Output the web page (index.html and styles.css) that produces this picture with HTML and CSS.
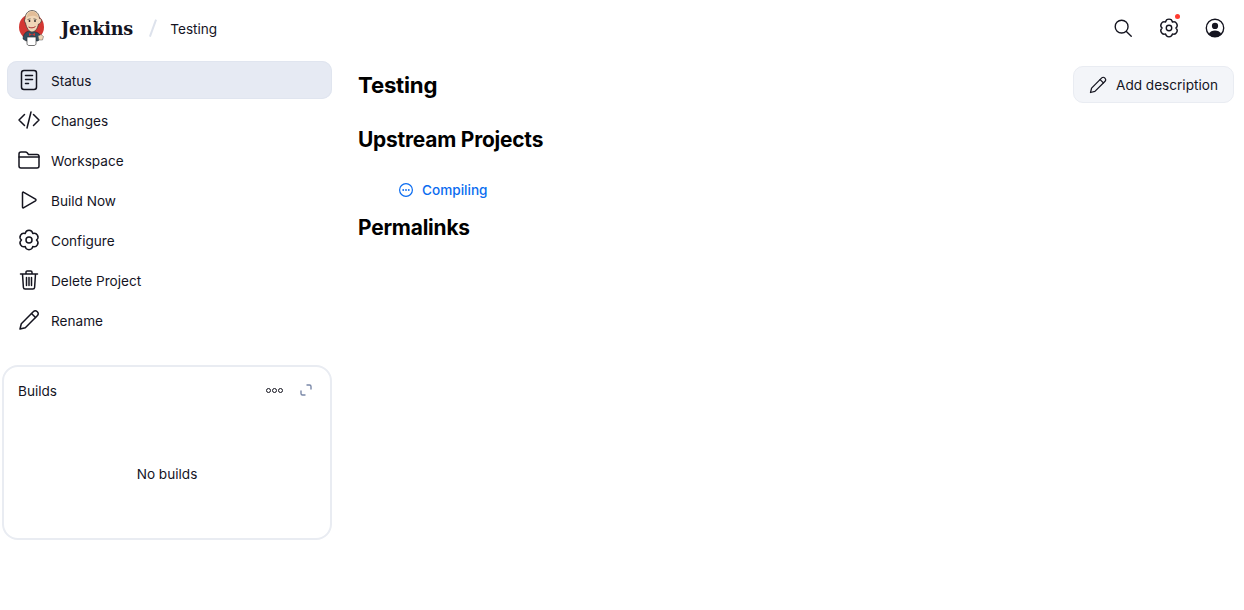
FILE: index.html
```html
<!DOCTYPE html>
<html lang="en">
<head>
    <meta charset="UTF-8">
    <title>Testing - Jenkins</title>
    <link rel="stylesheet" href="styles.css">
</head>
<body>

<header class="topbar">
    <div class="crumbs">
        <svg class="logo" viewBox="0 0 28 36" width="28" height="36">
            <ellipse cx="13.5" cy="17" rx="12.5" ry="13" fill="#d33833"/>
            <path d="M5 29c0-5 3-8 7-8l6 1c3 1 5 3 5 6l-3 3H8z" fill="#335061" stroke="#231f20" stroke-width=".5"/>
            <path d="M7 9c0-5 3-8.500 7-8.500s7 3 7.500 8c1.500 0 2.500 1.500 1.500 3.500s-2.500 2-2.500 2c-1 5-3.500 8-6.500 8s-5.500-4-6.500-9c-1-1-1.500-3-.5-4z" fill="#f0d6b7" stroke="#3a3a3a" stroke-width=".7"/>
            <path d="M8.500 8c1-4.500 3-6.500 5.500-6.500 3 0 5.500 2 6 6-3-2.500-8-2.500-11.500.5z" fill="#e2bd98"/>
            <path d="M9.500 9.500l3-.7M15.500 8.800l3 .7" stroke="#3a3a3a" stroke-width=".7" fill="none"/>
            <circle cx="11.500" cy="11" r=".9" fill="#231f20"/>
            <circle cx="17" cy="11" r=".9" fill="#231f20"/>
            <path d="M10.500 17c2 1.200 5 1.200 7-.5" stroke="#a33" stroke-width="1" fill="none"/>
            <path d="M11 23l3 1.500 3-1.500v3l-3-1.500-3 1.500z" fill="#d33833"/>
            <path d="M9 27h9v6.500c0 1.200-1 2-2 2h-5c-1 0-2-.8-2-2z" fill="#fff" stroke="#333" stroke-width=".7"/>
            <path d="M20 26l3-1.500 2.500 2-1 3.500-3.500 0z" fill="#f0d6b7" stroke="#555" stroke-width=".5"/>
        </svg>
        <span class="brand">Jenkins</span>
        <span class="slash"></span>
        <span class="crumb">Testing</span>
    </div>
    <div class="actions">
        <svg class="icon top" viewBox="0 0 24 24"><circle cx="10.500" cy="10.500" r="7"/><path d="M15.700 15.700l5.300 5.300"/></svg>
        <span class="gear-wrap">
            <svg class="icon top" viewBox="0 0 24 24"><use href="#gear"/></svg>
            <span class="dot"></span>
        </span>
        <svg class="icon top" viewBox="0 0 24 24"><circle cx="12" cy="12" r="9.500"/><circle cx="12" cy="9.800" r="3.400" class="solid"/><path d="M5 18.700c1.500-3 4.300-4 7-4s5.500 1 7 4c-1.700 1.900-4.300 3-7 3s-5.300-1.100-7-3z" class="solid"/></svg>
    </div>
</header>

<svg class="defs" width="0" height="0">
    <symbol id="gear" viewBox="0 0 24 24">
        <path fill="none" stroke="currentColor" stroke-width="1.500" stroke-linejoin="round" d="M8.250 5.500A3.800 3.800 0 0 1 15.750 5.500A3.800 3.800 0 0 1 19.500 12A3.800 3.800 0 0 1 15.750 18.500A3.800 3.800 0 0 1 8.250 18.500A3.800 3.800 0 0 1 4.500 12A3.800 3.800 0 0 1 8.250 5.500z"/>
        <circle cx="12" cy="12" r="3" fill="none" stroke="currentColor" stroke-width="1.500"/>
    </symbol>
</svg>

<div class="page">
    <aside class="side">
        <nav class="tasks">
            <a class="task active">
                <svg class="icon" viewBox="0 0 24 24"><rect x="4.500" y="2.500" width="15" height="19" rx="2.500"/><path d="M8.500 7.500h7M8.500 11.500h7M8.500 15.500h3"/></svg>
                Status
            </a>
            <a class="task">
                <svg class="icon" viewBox="0 0 24 24"><path d="M7.500 6.500L2 12l5.500 5.500M16.500 6.500L22 12l-5.500 5.500M14 4l-4 16"/></svg>
                Changes
            </a>
            <a class="task">
                <svg class="icon" viewBox="0 0 24 24"><path d="M2 7V6c0-1.200.8-2 2-2h4.500c.8 0 1.200.3 1.700.8L11.500 6.500H20c1.200 0 2 .8 2 2V18c0 1.200-.8 2-2 2H4c-1.200 0-2-.8-2-2z"/><path d="M2 9h20"/></svg>
                Workspace
            </a>
            <a class="task">
                <svg class="icon" viewBox="0 0 24 24"><path d="M5.500 5v14c0 .8.700 1.100 1.300.7L18.500 12.800c.6-.4.600-1.200 0-1.600L6.800 4.300c-.6-.4-1.300-.1-1.300.7z"/></svg>
                Build Now
            </a>
            <a class="task">
                <svg class="icon" viewBox="0 0 24 24"><use href="#gear"/></svg>
                Configure
            </a>
            <a class="task">
                <svg class="icon" viewBox="0 0 24 24"><path d="M3.500 6h17M9 6V4.200c0-.7.500-1.200 1.200-1.200h3.600c.7 0 1.200.5 1.200 1.200V6M5.500 6l.9 13.500c.1 1 .8 1.500 1.700 1.500h7.800c.9 0 1.600-.5 1.700-1.500L18.500 6M9.500 9.500v8M12 9.500v8M14.500 9.500v8"/></svg>
                Delete Project
            </a>
            <a class="task">
                <svg class="icon" viewBox="0 0 24 24"><path d="M3 21l1.300-5.300L16.500 3.500c1-1 2.500-1 3.500 0l.5.500c1 1 1 2.500 0 3.500L8.300 19.700z"/><path d="M14.500 5.500l4 4"/></svg>
                Rename
            </a>
        </nav>

        <section class="builds">
            <div class="builds-head">
                <span>Builds</span>
                <span class="builds-tools">
                    <span class="dots"><i></i><i></i><i></i></span>
                    <svg class="expand" viewBox="0 0 14 14"><path d="M8 2h2.500C11.500 2 12 2.500 12 3.500V6M6 12H3.500C2.500 12 2 11.500 2 10.500V8"/></svg>
                </span>
            </div>
            <div class="no-builds">No builds</div>
        </section>
    </aside>

    <main class="main">
        <div class="title-row">
            <h1>Testing</h1>
            <button class="add-desc">
                <svg class="icon small" viewBox="0 0 24 24"><path d="M3 21l1.300-5.300L16.500 3.500c1-1 2.500-1 3.500 0l.5.500c1 1 1 2.500 0 3.500L8.300 19.700z"/><path d="M14.500 5.500l4 4"/></svg>
                Add description
            </button>
        </div>
        <h2>Upstream Projects</h2>
        <a class="project">
            <svg class="status" viewBox="0 0 16 16"><circle cx="8" cy="8" r="6.400"/><circle cx="5.200" cy="8" r=".9" class="fill"/><circle cx="8" cy="8" r=".9" class="fill"/><circle cx="10.800" cy="8" r=".9" class="fill"/></svg>
            Compiling
        </a>
        <h2 class="permalinks">Permalinks</h2>
    </main>
</div>

</body>
</html>
```

FILE: styles.css
```css
* {
    box-sizing: border-box;
}

body {
    margin: 0;
    font-family: Inter, "Liberation Sans", sans-serif;
    font-size: 13.6px;
    color: #14141f;
    background-color: #fff;
}

.defs {
    display: block;
    height: 0;
}

.topbar {
    display: flex;
    justify-content: space-between;
    align-items: center;
    height: 56px;
    padding: 0 18px 0 18px;
}

.crumbs {
    display: flex;
    align-items: center;
}

.logo {
    display: block;
    margin-right: 15px;
}

.brand {
    font-family: "DejaVu Serif", "Liberation Serif", serif;
    font-weight: 700;
    font-size: 17.6px;
    letter-spacing: -0.3px;
    color: #14141f;
}

.slash {
    width: 1.500px;
    height: 18px;
    margin: 0 17px 0 19px;
    background-color: #dde2ec;
    transform: rotate(20deg);
}

.crumb {
    padding-top: 2px;
    color: #14141f;
}

.actions {
    display: flex;
    align-items: center;
    gap: 24px;
}

.icon {
    display: block;
    flex: none;
    width: 24px;
    height: 24px;
    fill: none;
    stroke: #14141f;
    stroke-width: 1.500;
    stroke-linecap: round;
    stroke-linejoin: round;
    color: #14141f;
}

.icon.top {
    width: 22px;
    height: 22px;
}

.icon .solid {
    fill: #14141f;
    stroke: none;
}

.gear-wrap {
    position: relative;
    display: block;
}

.dot {
    position: absolute;
    top: -3px;
    right: 0;
    width: 5px;
    height: 5px;
    border-radius: 50%;
    background-color: #ff3b30;
}

.page {
    display: flex;
    align-items: flex-start;
}

.side {
    width: 332px;
    flex: none;
    padding: 5px 0 0 2px;
}

.tasks {
    display: flex;
    flex-direction: column;
    gap: 2px;
    padding-left: 5px;
}

.task {
    display: flex;
    align-items: center;
    gap: 10px;
    height: 38px;
    padding: 2px 0 0 10px;
    border-radius: 10px;
    color: #14141f;
}

.task .icon {
    margin-top: -2px;
}

.task.active {
    background-color: #e6eaf3;
    box-shadow: 0 0 0 1px #e0e5ef inset;
}

.builds {
    height: 175px;
    margin-top: 26px;
    border: 2px solid #e9ecf2;
    border-radius: 16px;
    padding: 14px 17px 0 14px;
}

.builds-head {
    display: flex;
    justify-content: space-between;
    align-items: center;
    height: 20px;
}

.builds-tools {
    display: flex;
    align-items: center;
    gap: 16px;
    margin-top: -2px;
}

.dots {
    display: flex;
    gap: 1px;
}

.dots i {
    display: block;
    width: 5px;
    height: 5px;
    border: 1px solid #14141f;
    border-radius: 50%;
}

.expand {
    display: block;
    width: 14px;
    height: 14px;
    fill: none;
    stroke: #7a88a8;
    stroke-width: 1.400;
    stroke-linecap: round;
}

.no-builds {
    margin-top: 63px;
    padding-left: 3px;
    text-align: center;
    line-height: 20px;
}

.main {
    flex: 1;
    padding: 10px 10px 0 26px;
}

.title-row {
    display: flex;
    justify-content: space-between;
    align-items: center;
    height: 37px;
    margin-bottom: 24px;
}

h1 {
    margin: 0;
    font-size: 22.2px;
    font-weight: 700;
    letter-spacing: -0.2px;
    color: #000;
}

h2 {
    margin: 0;
    font-size: 20.9px;
    font-weight: 700;
    letter-spacing: -0.2px;
    line-height: 26px;
    color: #000;
}

.add-desc {
    display: flex;
    align-items: center;
    gap: 8px;
    height: 37px;
    width: 161px;
    padding: 0 0 0 14px;
    font: inherit;
    color: #14141f;
    background-color: #f3f5f9;
    border: 1px solid #e9ecf2;
    border-radius: 10px;
}

.icon.small {
    width: 20px;
    height: 20px;
}

.project {
    display: flex;
    align-items: center;
    gap: 8px;
    height: 20px;
    margin: 27px 0 0 40px;
    color: #0b6cf0;
    font-weight: 450;
}

.status {
    display: block;
    width: 16px;
    height: 16px;
    fill: none;
    stroke: #0b6cf0;
    stroke-width: 1.200;
}

.status .fill {
    fill: #0b6cf0;
    stroke: none;
}

.permalinks {
    margin-top: 15px;
}
```
